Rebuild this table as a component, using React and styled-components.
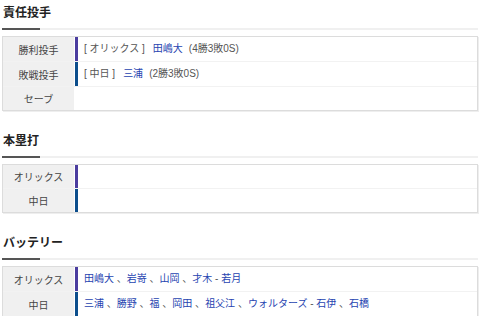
import React from "react";
import styled, { createGlobalStyle } from "styled-components";

const GlobalStyle = createGlobalStyle`
  body {
    margin: 0;
    background: #fff;
    font-family: "Liberation Sans", "Noto Sans CJK JP", sans-serif;
    color: #333;
  }
`;

const Page = styled.div`
  width: 476px;
  padding: 0 2px;
`;

const Section = styled.section`
  & + & {
    margin-top: 17px;
  }
`;

const Heading = styled.h2`
  position: relative;
  margin: 0;
  padding: 5px 0 9px 1px;
  font-family: "Noto Sans CJK JP", sans-serif;
  font-size: 12px;
  line-height: 14px;
  font-weight: bold;
  color: #222;
  border-bottom: 2px solid #f0f0f0;

  &::after {
    content: "";
    position: absolute;
    left: 0;
    bottom: -2px;
    width: 38px;
    height: 2px;
    background: #555;
  }
`;

const Table = styled.div`
  margin-top: 6px;
  border: 1px solid #dcdcdc;
  box-shadow: 1px 1px 0 #eee;
`;

const Row = styled.div`
  display: flex;
  min-height: 23px;

  & + & {
    border-top: 1px solid #f2f2f2;
  }
`;

const Label = styled.div`
  width: 71px;
  flex-shrink: 0;
  margin-right: 1px;
  background: #f0f0f0;
  display: flex;
  align-items: center;
  justify-content: center;
  font-size: 10px;
  color: #444;
`;

const Content = styled.div`
  flex: 1;
  padding: 5px 0 5px 6px;
  line-height: 14px;
  border-left: 3px solid ${(p) => p.$team || "transparent"};
  font-size: 10px;
  color: #555;
  white-space: pre;

  &:empty {
    padding: 0;
  }
`;

const Team = styled.span`
  margin-right: 8px;
`;

const Player = styled.a`
  color: #2643b0;
  text-decoration: none;
`;

const Stat = styled.span`
  margin-left: 6px;
  color: #555;
`;

const ORIX = "#4b3d9f";
const DRAGONS = "#0c4e8c";

function Names({ list }) {
  return list.map((n, i) => (
    <React.Fragment key={n}>
      {i > 0 && " 、"}
      <Player href="#">{n}</Player>
    </React.Fragment>
  ));
}

function Battery({ pitchers, catchers }) {
  return (
    <>
      <Names list={pitchers} />
      {" - "}
      <Names list={catchers} />
    </>
  );
}

export default function App() {
  return (
    <Page>
      <GlobalStyle />
      <Section>
        <Heading>責任投手</Heading>
        <Table>
          <Row>
            <Label>勝利投手</Label>
            <Content $team={ORIX}>
              <Team>[ オリックス ]</Team>
              <Player href="#">田嶋大</Player>
              <Stat>(4勝3敗0S)</Stat>
            </Content>
          </Row>
          <Row>
            <Label>敗戦投手</Label>
            <Content $team={DRAGONS}>
              <Team>[ 中日 ]</Team>
              <Player href="#">三浦</Player>
              <Stat>(2勝3敗0S)</Stat>
            </Content>
          </Row>
          <Row>
            <Label>セーブ</Label>
            <Content />
          </Row>
        </Table>
      </Section>

      <Section>
        <Heading>本塁打</Heading>
        <Table>
          <Row>
            <Label>オリックス</Label>
            <Content $team={ORIX} />
          </Row>
          <Row>
            <Label>中日</Label>
            <Content $team={DRAGONS} />
          </Row>
        </Table>
      </Section>

      <Section>
        <Heading>バッテリー</Heading>
        <Table>
          <Row>
            <Label>オリックス</Label>
            <Content $team={ORIX}>
              <Battery
                pitchers={["田嶋大", "岩嵜", "山岡", "才木"]}
                catchers={["若月"]}
              />
            </Content>
          </Row>
          <Row>
            <Label>中日</Label>
            <Content $team={DRAGONS}>
              <Battery
                pitchers={["三浦", "勝野", "福", "岡田", "祖父江", "ウォルターズ"]}
                catchers={["石伊", "石橋"]}
              />
            </Content>
          </Row>
        </Table>
      </Section>
    </Page>
  );
}
